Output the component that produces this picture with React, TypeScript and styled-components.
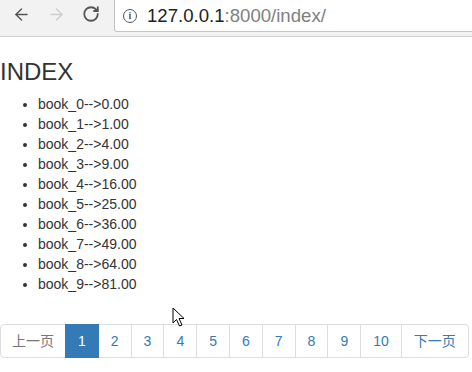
import { FC } from "react"
import styled, { createGlobalStyle } from "styled-components"
import { ArrowLeft, ArrowRight, RotateCw } from "lucide-react"

const GlobalStyle = createGlobalStyle`
body{
  margin: 0;
  font: 400 14px/1.42857 "Liberation Sans", Arial, "Noto Sans CJK SC", sans-serif;
  color: #333;
  background: #fff;
}
`

const Toolbar = styled.header`
height: 36px;
display: flex;
background: #f2f2f2;
border-bottom: 1px solid #cfcfcf;
`

const NavButtons = styled.div`
width: 114px;
display: flex;
align-items: flex-start;
padding: 5px 0 0 10px;
gap: 13px;
box-sizing: border-box;
`

const NavIcon = styled.span<{ $disabled?: boolean }>`
width: 22px;
height: 18px;
display: flex;
align-items: center;
justify-content: center;
color: ${p => (p.$disabled ? "#cfcfcf" : "#555")};
`

const Omnibox = styled.div`
flex: 1;
height: 31px;
display: flex;
align-items: center;
gap: 10px;
padding-left: 8px;
background: #fff;
border-left: 1px solid #c4c4c4;
border-bottom: 1px solid #c4c4c4;
border-bottom-left-radius: 3px;
`

const InfoIcon = styled.span`
width: 14px;
height: 14px;
border: 1.5px solid #555;
border-radius: 50%;
display: flex;
align-items: center;
justify-content: center;
font: 700 10px "Liberation Serif", serif;
color: #555;
box-sizing: border-box;
`

const Url = styled.span`
font: 400 18.6px "Liberation Sans", Arial, sans-serif;
color: #222;
span{
  color: #808080;
}
`

const Page = styled.main`
position: relative;
display: flow-root;
`

const Title = styled.h3`
margin: 22px 0 10px;
font: 500 24px/1.1 "Liberation Sans", Arial, sans-serif;
color: #333;
`

const Books = styled.ul`
margin: 0 0 10px;
padding-left: 38px;
`

const Pager = styled.ul`
display: flex;
margin: 29px 0 20px;
padding: 0;
list-style: none;
`

const PageLink = styled.li<{ $active?: boolean; $muted?: boolean }>`
margin-left: -1px;
padding: 6px 12px;
line-height: 20px;
border: 1px solid ${p => (p.$active ? "#337ab7" : "#ddd")};
background: ${p => (p.$active ? "#337ab7" : "#fff")};
color: ${p => (p.$active ? "#fff" : p.$muted ? "#777" : "#337ab7")};
position: relative;
z-index: ${p => (p.$active ? 2 : 1)};
&:first-child{
  margin-left: 0;
  padding: 6px 11px;
  border-radius: 4px 0 0 4px;
}
&:last-child{
  border-radius: 0 4px 4px 0;
}
`

const Cursor = styled.svg`
position: absolute;
left: 172px;
top: 270px;
z-index: 5;
`

export default function App() {
  const books = Array.from({ length: 10 }, (_, i) => `book_${i}-->${(i * i).toFixed(2)}`)
  const pages = Array.from({ length: 10 }, (_, i) => i + 1)
  return (
    <>
      <GlobalStyle />
      <Toolbar>
        <NavButtons>
          <NavIcon><ArrowLeft size={19} strokeWidth={1.8} /></NavIcon>
          <NavIcon $disabled><ArrowRight size={19} strokeWidth={1.8} /></NavIcon>
          <NavIcon><RotateCw size={18} strokeWidth={2.4} /></NavIcon>
        </NavButtons>
        <Omnibox>
          <InfoIcon>i</InfoIcon>
          <Url>127.0.0.1<span>:8000/index/</span></Url>
        </Omnibox>
      </Toolbar>
      <Page>
        <Title>INDEX</Title>
        <Books>
          {books.map(b => <li key={b}>{b}</li>)}
        </Books>
        <Pager>
          <PageLink $muted>上一页</PageLink>
          {pages.map(n => <PageLink key={n} $active={n === 1}>{n}</PageLink>)}
          <PageLink>下一页</PageLink>
        </Pager>
        <Cursor width="14" height="21" viewBox="0 0 14 21">
          <path d="M1 1 L1 16 L4.5 12.5 L7.5 19 L10 18 L7 11.5 L12 11.5 Z" fill="#fff" stroke="#000" strokeWidth="1" strokeLinejoin="round" />
        </Cursor>
      </Page>
    </>
  )
}
